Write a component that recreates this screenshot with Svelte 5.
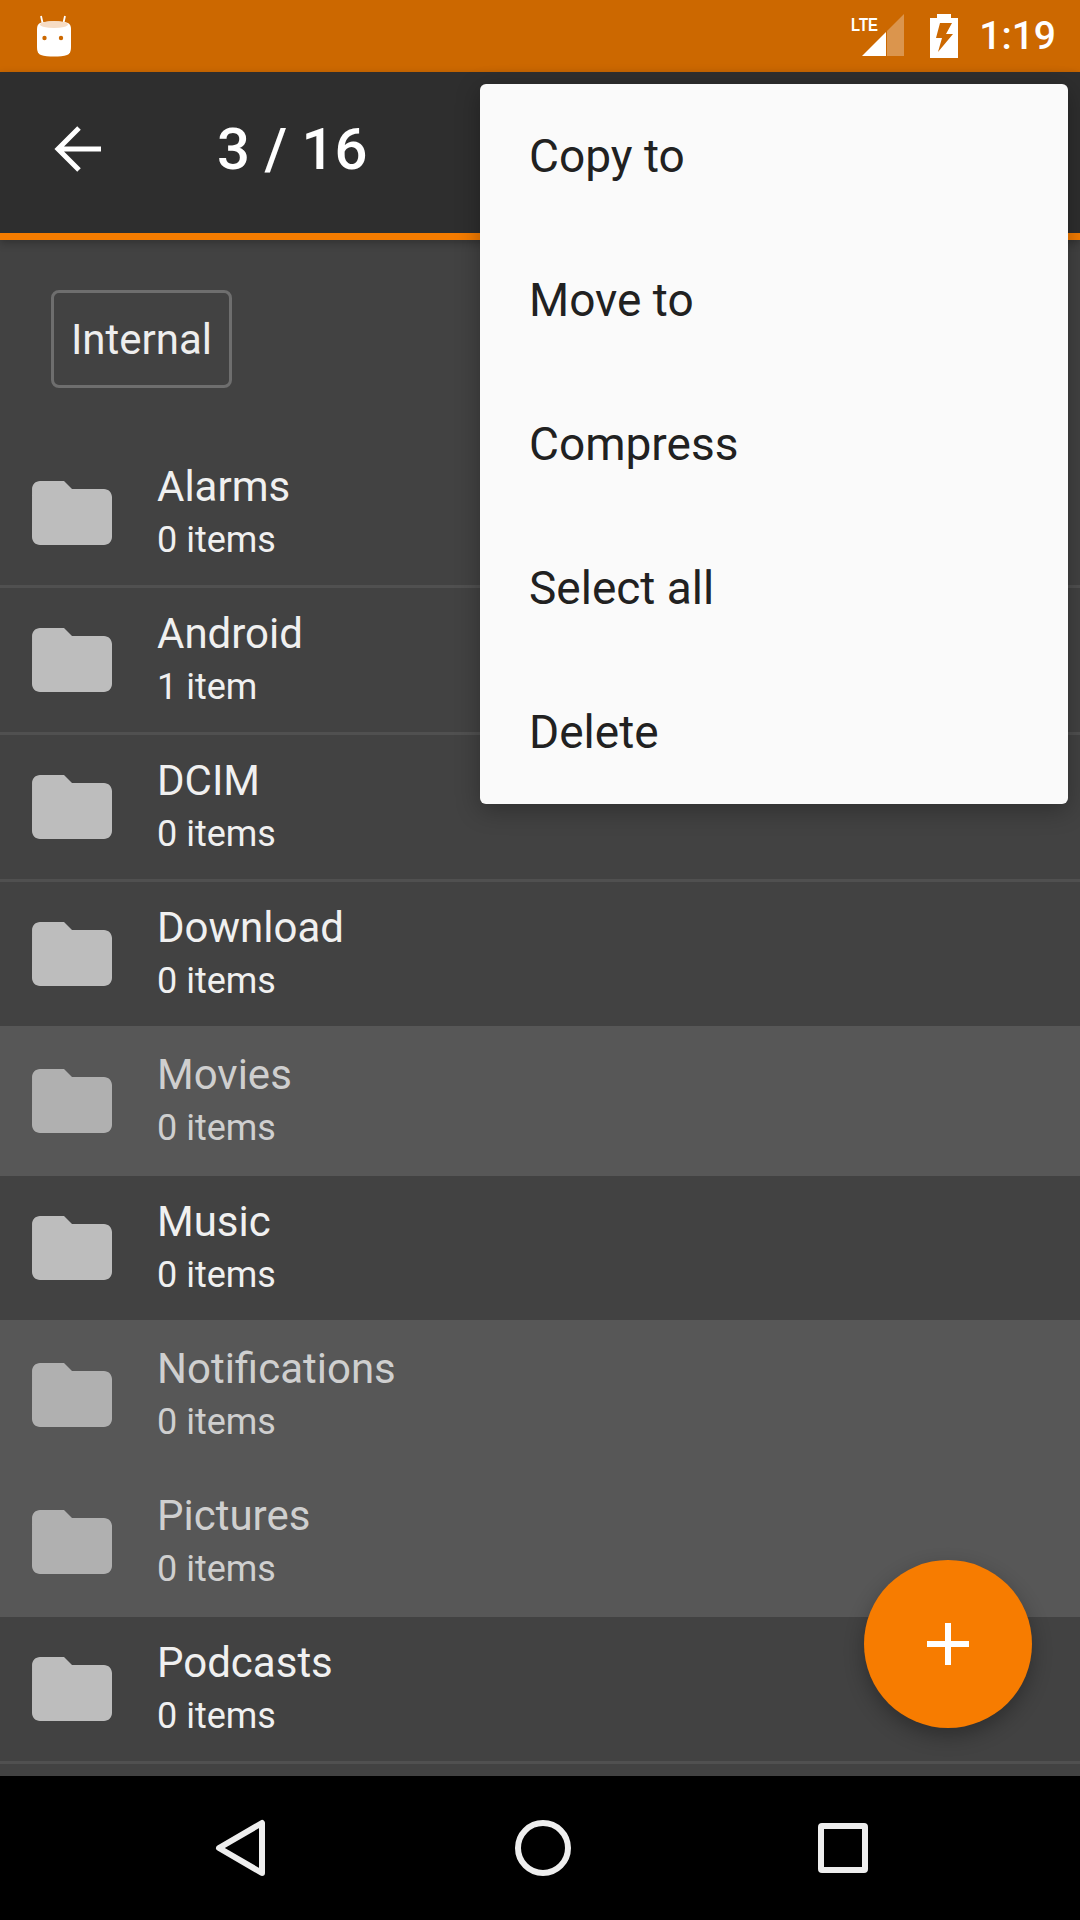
<script>
  const folders = [
    { name: "Alarms", count: "0 items" },
    { name: "Android", count: "1 item" },
    { name: "DCIM", count: "0 items" },
    { name: "Download", count: "0 items", beforeSelected: true },
    { name: "Movies", count: "0 items", selected: true },
    { name: "Music", count: "0 items", beforeSelected: true },
    { name: "Notifications", count: "0 items", selected: true },
    { name: "Pictures", count: "0 items", selected: true },
    { name: "Podcasts", count: "0 items" },
    { name: "Ringtones", count: "0 items" }
  ];
  const menuItems = ["Copy to", "Move to", "Compress", "Select all", "Delete"];
</script>

<div class="screen">
  <header class="status">
    <svg class="robot" width="40" height="42" viewBox="0 0 40 42" aria-hidden="true">
      <path d="M7 1l2 9M31 1l-2 9" stroke="#fff" stroke-width="1.8" fill="none" />
      <path d="M6 8C10 6 30 6 34 8c2 1 3 3 3 6v18c0 4-1 7-4 8-6 2-20 2-26 0-3-1-4-4-4-8V14c0-3 1-5 3-6z" fill="#fff" />
      <ellipse cx="20" cy="9.5" rx="14" ry="3.5" fill="#f6dcc4" />
      <circle cx="10.5" cy="23" r="2.2" fill="#cc6800" />
      <circle cx="27" cy="23" r="2.2" fill="#cc6800" />
    </svg>
    <div class="status-right">
      <svg class="signal" width="56" height="46" viewBox="0 0 56 46" aria-hidden="true">
        <text class="lte" x="2" y="18" textLength="27" lengthAdjust="spacingAndGlyphs">LTE</text>
        <path d="M13 43l24-24v24z" fill="#fff" />
        <path d="M38 18l17-17v42H38z" fill="#fff" opacity="0.3" />
      </svg>
      <svg class="battery" width="30" height="44" viewBox="0 0 30 44" aria-hidden="true">
        <path d="M8 0h14v4h7v40H1V4h7z" fill="#fff" />
        <path d="M11 9h12l-6 11h7L9 38l4-14H7z" fill="#cc6800" />
      </svg>
      <span class="time">1:19</span>
    </div>
  </header>

  <div class="toolbar">
    <svg class="back" width="48" height="48" viewBox="0 0 48 48" aria-hidden="true">
      <path d="M47 24H5M25 3L4 24l21 21" fill="none" stroke="#fff" stroke-width="5" />
    </svg>
    <span class="title">3 / 16</span>
  </div>

  <div class="crumbs">
    <span class="chip">Internal</span>
  </div>

  <div class="list">
    {#each folders as folder}
      <div class="row" class:selected={folder.selected} class:before-selected={folder.beforeSelected}>
        <svg class="folder" width="96" height="96" viewBox="0 0 24 24" aria-hidden="true">
          <path d="M10 4H4c-1.1 0-1.99.9-1.99 2L2 18c0 1.1.9 2 2 2h16c1.1 0 2-.9 2-2V8c0-1.1-.9-2-2-2h-8l-2-2z" />
        </svg>
        <div class="info">
          <div class="name">{folder.name}</div>
          <div class="count">{folder.count}</div>
        </div>
      </div>
    {/each}
  </div>

  <nav class="nav">
    <svg width="52" height="58" viewBox="0 0 52 58" aria-hidden="true">
      <path d="M47 4v50L4 29z" fill="none" stroke="#eee" stroke-width="6" stroke-linejoin="round" />
    </svg>
    <svg width="58" height="58" viewBox="0 0 58 58" aria-hidden="true">
      <circle cx="29" cy="29" r="25" fill="none" stroke="#eee" stroke-width="6" />
    </svg>
    <svg width="50" height="50" viewBox="0 0 50 50" aria-hidden="true">
      <rect x="3" y="3" width="44" height="44" rx="1" fill="none" stroke="#eee" stroke-width="6" />
    </svg>
  </nav>

  <ul class="menu">
    {#each menuItems as item}
      <li>{item}</li>
    {/each}
  </ul>

  <div class="fab">
    <svg width="42" height="42" viewBox="0 0 42 42" aria-hidden="true">
      <path d="M18 0h6v18h18v6H24v18h-6V24H0v-6h18z" fill="#fff" />
    </svg>
  </div>
</div>

<style>
  :global(body) {
    margin: 0;
    background: #424242;
  }

  .screen {
    position: relative;
    display: flex;
    flex-direction: column;
    width: 1080px;
    height: 1920px;
    overflow: hidden;
    background: #424242;
    font-family: Roboto, "Liberation Sans", sans-serif;
  }

  .status {
    display: flex;
    flex: none;
    align-items: center;
    justify-content: space-between;
    height: 72px;
    padding: 0 24px 0 34px;
    box-sizing: border-box;
    background: #cc6800;
    color: #fff;
  }

  .status-right {
    display: flex;
    align-items: center;
  }

  .signal {
    margin-right: 24px;
  }

  .lte {
    font-family: "Liberation Sans", sans-serif;
    font-size: 19px;
    font-weight: 700;
    fill: #fff;
  }

  .time {
    margin-left: 20px;
    font-size: 39px;
    font-weight: 500;
  }

  .toolbar {
    display: flex;
    flex: none;
    align-items: center;
    height: 168px;
    padding-bottom: 7px;
    box-sizing: border-box;
    border-bottom: 7px solid #f57c00;
    background: #2e2e2e;
    box-shadow: 0 3px 8px rgba(0, 0, 0, 0.25);
    z-index: 1;
  }

  .back {
    margin-left: 54px;
  }

  .title {
    margin-left: 115px;
    font-size: 58px;
    font-weight: 500;
    color: #fff;
  }

  .crumbs {
    flex: none;
    height: 201px;
    padding: 50px 0 0 51px;
    box-sizing: border-box;
  }

  .chip {
    display: flex;
    align-items: center;
    justify-content: center;
    width: 181px;
    height: 98px;
    box-sizing: border-box;
    border: 3px solid #6e6e6e;
    border-radius: 8px;
    font-size: 42px;
    color: #eee;
  }

  .list {
    flex: 1;
    min-height: 0;
    overflow: hidden;
  }

  .row {
    display: flex;
    align-items: center;
    height: 147px;
    box-sizing: border-box;
    border-bottom: 3px solid #505050;
  }

  .row.before-selected,
  .row.selected {
    border-bottom-color: #575757;
  }

  .row.selected {
    background: #575757;
  }

  .row.selected + .row:not(.selected) {
    border-top: 0;
  }

  .folder {
    flex: none;
    margin-left: 24px;
    fill: #bdbdbd;
  }

  .selected .folder {
    fill: #b0b0b0;
  }

  .info {
    margin-left: 37px;
    color: #f0f0f0;
  }

  .selected .info {
    color: #cfcfcf;
  }

  .name {
    font-size: 42px;
    line-height: 50px;
  }

  .count {
    margin-top: 3px;
    font-size: 36px;
    line-height: 50px;
  }

  .nav {
    display: flex;
    flex: none;
    align-items: center;
    justify-content: space-between;
    height: 144px;
    padding: 0 212px 0 215px;
    box-sizing: border-box;
    background: #000;
  }

  .menu {
    position: absolute;
    top: 84px;
    left: 480px;
    width: 588px;
    margin: 0;
    padding: 0;
    list-style: none;
    border-radius: 6px;
    background: #fafafa;
    box-shadow: 0 6px 24px rgba(0, 0, 0, 0.3);
    z-index: 2;
  }

  .menu li {
    display: flex;
    align-items: center;
    height: 144px;
    padding-left: 49px;
    font-size: 46px;
    color: #212121;
  }

  .fab {
    position: absolute;
    top: 1560px;
    left: 864px;
    display: flex;
    align-items: center;
    justify-content: center;
    width: 168px;
    height: 168px;
    border-radius: 50%;
    background: #f77c00;
    box-shadow: 0 8px 20px rgba(0, 0, 0, 0.3);
    z-index: 2;
  }
</style>
